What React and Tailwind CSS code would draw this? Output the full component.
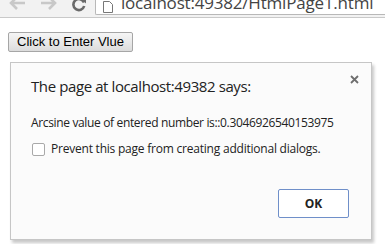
import React from 'react';

export default function App() {
  return (
    <div className="w-[385px] h-[244px] overflow-hidden bg-white" style={{ fontFamily: '"Open Sans", sans-serif' }}>
      {/* browser toolbar, cut off at the top */}
      <div className="h-[18px] bg-[#f2f2f2] border-b border-[#c9c9c9] flex items-end relative">
        <div className="flex items-center h-[18px] pl-[9px] gap-[14px] -mt-[6px]">
          <svg width="17" height="14" viewBox="0 0 17 14" className="-mt-[10px]">
            <path d="M16 7H3M8 1L2 7l6 6" stroke="#c8c8c8" strokeWidth="2.6" fill="none" />
          </svg>
          <svg width="17" height="14" viewBox="0 0 17 14" className="-mt-[10px]">
            <path d="M1 7h13M9 1l6 6-6 6" stroke="#c8c8c8" strokeWidth="2.6" fill="none" />
          </svg>
          <svg width="16" height="16" viewBox="0 0 16 16" className="-mt-[8px]">
            <path d="M13 6.5A5.5 5.5 0 1 0 13.2 10" stroke="#6a6a6a" strokeWidth="2.6" fill="none" />
            <path d="M9.5 2.5h5.5v5z" fill="#6a6a6a" />
          </svg>
        </div>
        <div className="absolute left-[95px] right-0 top-0 h-[15px] bg-white border-l border-b border-[#b8b8b8] rounded-bl-[2px] overflow-hidden flex">
          <svg width="10" height="12" viewBox="0 0 10 12" className="ml-[7px] mt-[1px]">
            <path d="M0.5 0.5h6l3 3v8h-9z" fill="white" stroke="#777" />
          </svg>
          <span className="ml-[8px] -mt-[8px] text-[17px] leading-[22px] text-[#444] whitespace-nowrap tracking-[-0.2px]">
            localhost:49382/HtmlPage1.html
          </span>
        </div>
      </div>

      {/* page */}
      <div className="pl-[8px] pt-[10px]">
        <button
          className="h-[20px] px-[8px] border border-[#a6a6a6] rounded-[2px] bg-gradient-to-b from-[#f6f6f6] to-[#dcdcdc] text-[13px] leading-[18px] text-black"
          style={{ fontFamily: '"Liberation Sans", Arial, sans-serif' }}
        >
          Click to Enter Vlue
        </button>

        <div className="ml-[2px] mt-[10px] w-[362px] h-[178px] bg-[#fbfbfb] border border-[#c6c6c6] shadow-[2px_3px_3px_rgba(0,0,0,0.22)] relative flex flex-col">
          <div className="absolute right-[12px] top-[12px]">
            <svg width="9" height="9" viewBox="0 0 9 9">
              <path d="M1 1l7 7M8 1L1 8" stroke="#6e6e6e" strokeWidth="1.8" />
            </svg>
          </div>
          <div className="pl-[20px] pt-[12px] text-[15px] leading-[22px] tracking-[-0.4px] text-[#222]">
            The page at localhost:49382 says:
          </div>
          <div className="pl-[20px] pt-[18px] text-[12px] leading-[16px] tracking-[-0.35px] text-[#222]">
            Arcsine value of entered number is::0.3046926540153975
          </div>
          <div className="pl-[21px] pt-[10px] flex items-center gap-[6px] text-[12px] leading-[16px] tracking-[-0.22px] text-[#222]">
            <span className="w-[13px] h-[13px] border border-[#a9a9a9] rounded-[2px] bg-white" />
            <span>Prevent this page from creating additional dialogs.</span>
          </div>
          <div className="flex-1" />
          <div className="flex justify-end pr-[22px] pb-[21px]">
            <button className="w-[71px] h-[29px] border border-[#6f8fc9] rounded-[2px] bg-white text-[12px] font-bold text-[#222]">
              OK
            </button>
          </div>
        </div>
      </div>
    </div>
  );
}
